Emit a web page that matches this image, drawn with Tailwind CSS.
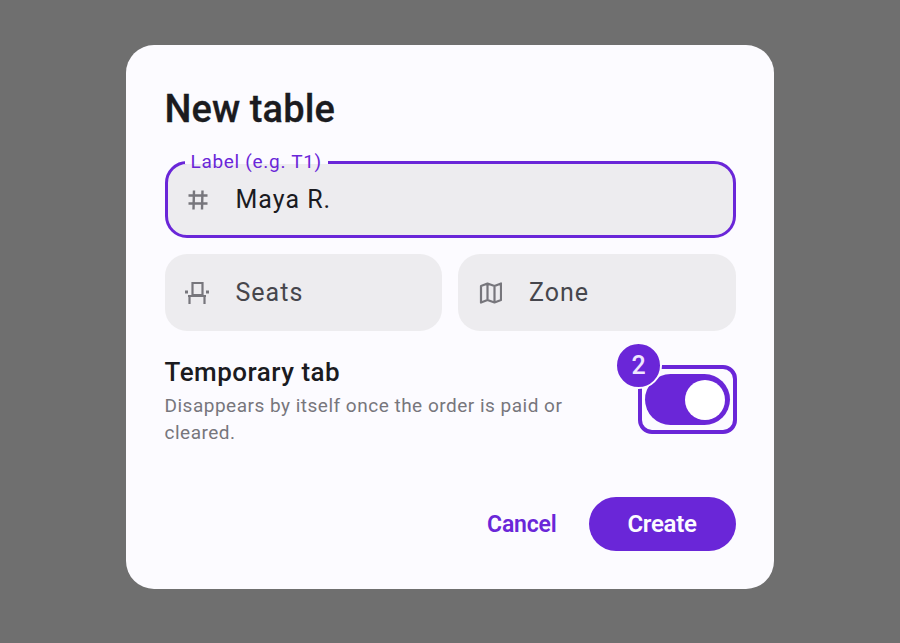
<!DOCTYPE html>
<html><head><meta charset="utf-8"><script src="https://cdn.jsdelivr.net/npm/@tailwindcss/browser@4"></script></head>
<body class="m-0">
<div class="w-[900px] h-[643px] bg-[#6f6f6f] flex items-start justify-center pt-[45px] font-['Roboto',sans-serif]">
  <div class="w-[648px] h-[544px] bg-[#fcfbff] rounded-[28px] pt-[40px] px-[38.5px] flex flex-col">
    <h1 class="text-[38px] leading-[48px] font-medium text-[#1b1b1f] tracking-[0.1px] m-0 [-webkit-text-stroke:0.3px_#1b1b1f]">New table</h1>
    <div class="relative mt-[28px] h-[77px] rounded-[22px] border-[3px] border-[#6a26d8] bg-[#edecef] flex items-center pl-[18px]">
      <span class="absolute left-[17px] top-[-4px] bg-[#fcfbff] h-[4px] px-[6px] flex items-center text-[19px] leading-[20px] text-[#6a26d8] tracking-[0.7px]">Label (e.g. T1)</span>
      <svg class="w-[24px] h-[24px] text-[#77767c]" viewBox="0 0 24 24" fill="none" stroke="currentColor" stroke-width="2.4"><path d="M8 2.500 7.500 21.500M16.500 2.500l-.5 19M2.500 7.500h19M2.500 15.500h19"/></svg>
      <span class="ml-[26px] text-[25px] leading-[32px] text-[#1b1b1f] tracking-[1px]">Maya R.</span>
    </div>
    <div class="mt-[16px] flex gap-[16px]">
      <div class="flex-1 h-[77px] rounded-[22px] bg-[#edecef] flex items-center pl-[20px]">
        <svg class="w-[24px] h-[24px] text-[#77767c]" viewBox="0 0 24 24" fill="none" stroke="currentColor" stroke-width="2.2"><path d="M7.500 14V2h10v12M3 15h18M4.500 23v-7M19.500 23v-7"/><path d="M7 13h10v2H7z" fill="currentColor" stroke="none"/><path d="M0 9.500h3v3H0zM21 9.500h3v3h-3z" fill="currentColor" stroke="none"/></svg>
        <span class="ml-[27px] text-[25px] leading-[32px] text-[#46464c] tracking-[1px]">Seats</span>
      </div>
      <div class="flex-1 h-[77px] rounded-[22px] bg-[#edecef] flex items-center pl-[20px]">
        <svg class="w-[24px] h-[24px] text-[#77767c]" viewBox="-1 0 24 24" fill="none" stroke="currentColor" stroke-width="2.2" stroke-linejoin="round"><path d="M2 5 8.500 2.500l7 2.500L22 2.500V19l-6.500 2.500-7-2.500L2 21.500zM8.500 2.500V19M15.500 5v16.500"/></svg>
        <span class="ml-[27px] text-[25px] leading-[32px] text-[#46464c] tracking-[1px]">Zone</span>
      </div>
    </div>
    <div class="mt-[24px] flex justify-between items-start">
      <div class="w-[430px]">
        <div class="text-[26px] leading-[34px] font-medium text-[#1b1b1f] tracking-[0.5px]">Temporary tab</div>
        <div class="mt-[3px] text-[19px] leading-[27px] text-[#77767c] tracking-[0.5px]">Disappears by itself once the order is paid or cleared.</div>
      </div>
      <div class="relative mt-[10px] mr-[-1.5px] w-[99px] h-[69px] border-[4px] border-[#6a26d8] rounded-[14px] flex items-center justify-center">
        <div class="w-[85px] h-[51px] rounded-full bg-[#6a26d8] flex items-center justify-end pr-[5px]">
          <div class="w-[40px] h-[40px] rounded-full bg-white"></div>
        </div>
        <div class="absolute left-[-27px] top-[-27px] w-[47px] h-[47px] rounded-full bg-[#6a26d8] border-[2px] border-[#fcfbff] flex items-center justify-center text-[25px] font-medium text-[#f0e6ff]">2</div>
      </div>
    </div>
    <div class="mt-auto mb-[38px] flex justify-end items-center gap-[32px]">
      <span class="pt-[3px] text-[23px] font-semibold text-[#6a26d8] tracking-[-0.2px]">Cancel</span>
      <div class="w-[147px] h-[54px] rounded-full bg-[#6a26d8] flex items-center justify-center text-[24px] font-semibold text-[#fcfbff] tracking-[-0.3px]">Create</div>
    </div>
  </div>
</div>
</body></html>
